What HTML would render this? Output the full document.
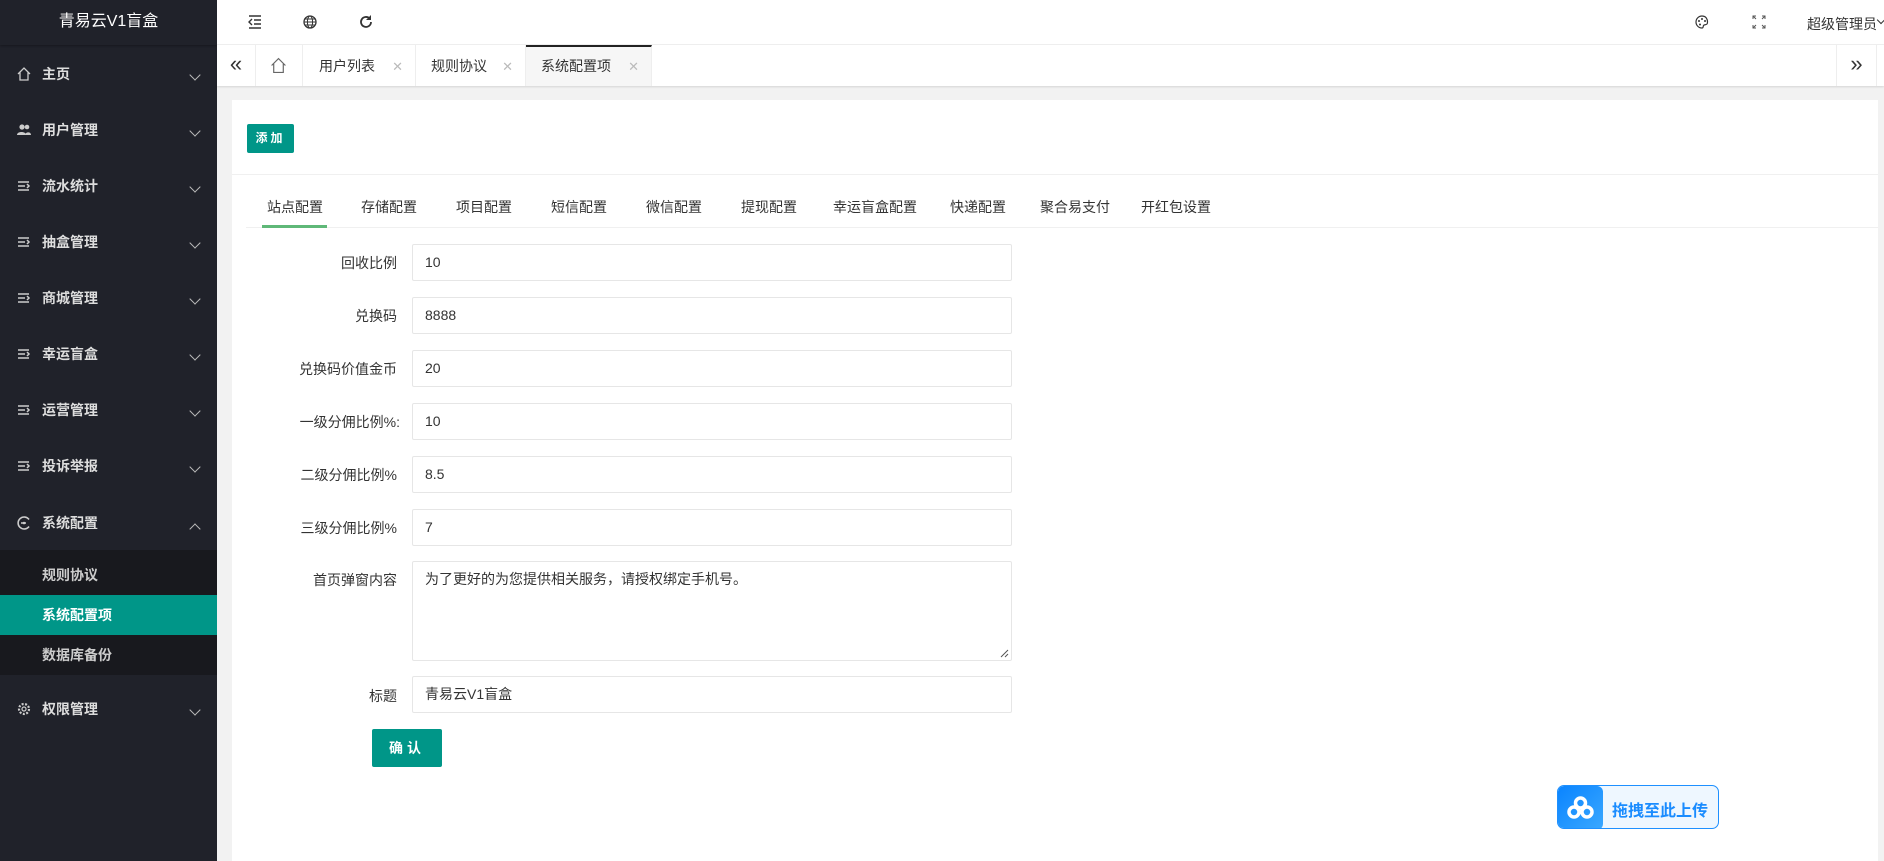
<!DOCTYPE html>
<html><head><meta charset="utf-8"><style>
*{margin:0;padding:0;box-sizing:border-box}
body{width:1884px;height:861px;overflow:hidden;background:#f2f2f2;font-family:"Liberation Sans","Noto Sans CJK SC",sans-serif;font-size:14px;color:#333;position:relative}
.side{position:absolute;left:0;top:0;width:217px;height:861px;background:#20222a}
.logo{height:45px;line-height:44px;text-align:center;color:#fff;font-size:16px;background:#20222a;box-shadow:0 1px 2px rgba(0,0,0,.3)}
.it{position:absolute;left:0;width:217px;height:56px;color:#ddd;font-weight:bold}
.it .t{position:absolute;left:42px;top:19px}
.it .ic{position:absolute;left:16px;top:21px;width:16px;height:16px}
.it .ar{position:absolute;left:191px;top:26px;width:8px;height:8px;border-right:1.5px solid #bbb;border-bottom:1.5px solid #bbb;transform:rotate(45deg)}
.it .ar.up{transform:rotate(-135deg);top:31px}
.sub{position:absolute;left:0;top:550px;width:217px;height:125px;background:#18191e}
.sub div{height:40px;line-height:40px;padding-left:42px;color:#ccc;font-weight:bold}
.sub div:first-child{height:45px;line-height:50px}
.sub .on{background:#009688;color:#fff}
.head{position:absolute;left:217px;top:0;right:0;height:45px;background:#fff;border-bottom:1px solid #f0f0f0}
.tabs{position:absolute;left:217px;top:45px;right:0;height:41px;background:#fff;box-shadow:0 1px 2px rgba(0,0,0,.12)}
.tb{position:absolute;top:0;height:41px;line-height:41px;border-right:1px solid #eee;color:#333}
.tb .x{color:#bbb;position:absolute;right:12px;font-size:13px}
.card{position:absolute;left:232px;top:100px;width:1646px;height:761px;background:#fff}
.btn{position:absolute;background:#009688;color:#fff;font-weight:bold;text-align:center;border-radius:2px}
.ct{position:absolute;top:196px;font-size:14px;color:#333}
.lbl{position:absolute;right:1487px;text-align:right;width:200px;font-size:14px}
.inp{position:absolute;left:412px;width:600px;height:37px;border:1px solid #e6e6e6;padding-left:12px;line-height:35px;font-size:14px;border-radius:2px}
</style></head><body>
<div class="side">
<div class="logo">青易云V1盲盒</div>
<div class="it" style="top:45px"><svg class="ic" viewBox="0 0 16 16"><path d="M2 8L8 2l6 6M4 6.5V14h8V6.5" fill="none" stroke="#ccc" stroke-width="1.3"/></svg><span class="t">主页</span><i class="ar"></i></div>
<div class="it" style="top:101px"><svg class="ic" viewBox="0 0 16 16"><circle cx="6" cy="5" r="2.6" fill="#ccc"/><circle cx="11" cy="5" r="2.3" fill="#ccc"/><path d="M1 13c0-4 9-4 9 0zM9 13c0-3 6-4 6 0z" fill="#ccc"/></svg><span class="t">用户管理</span><i class="ar"></i></div>
<div class="it" style="top:157px"><svg class="ic" viewBox="0 0 16 16"><path d="M2 4h11M2 8h7M2 12h11M11 6l2 2-2 2" fill="none" stroke="#ccc" stroke-width="1.5"/></svg><span class="t">流水统计</span><i class="ar"></i></div>
<div class="it" style="top:213px"><svg class="ic" viewBox="0 0 16 16"><path d="M2 4h11M2 8h7M2 12h11M11 6l2 2-2 2" fill="none" stroke="#ccc" stroke-width="1.5"/></svg><span class="t">抽盒管理</span><i class="ar"></i></div>
<div class="it" style="top:269px"><svg class="ic" viewBox="0 0 16 16"><path d="M2 4h11M2 8h7M2 12h11M11 6l2 2-2 2" fill="none" stroke="#ccc" stroke-width="1.5"/></svg><span class="t">商城管理</span><i class="ar"></i></div>
<div class="it" style="top:325px"><svg class="ic" viewBox="0 0 16 16"><path d="M2 4h11M2 8h7M2 12h11M11 6l2 2-2 2" fill="none" stroke="#ccc" stroke-width="1.5"/></svg><span class="t">幸运盲盒</span><i class="ar"></i></div>
<div class="it" style="top:381px"><svg class="ic" viewBox="0 0 16 16"><path d="M2 4h11M2 8h7M2 12h11M11 6l2 2-2 2" fill="none" stroke="#ccc" stroke-width="1.5"/></svg><span class="t">运营管理</span><i class="ar"></i></div>
<div class="it" style="top:437px"><svg class="ic" viewBox="0 0 16 16"><path d="M2 4h11M2 8h7M2 12h11M11 6l2 2-2 2" fill="none" stroke="#ccc" stroke-width="1.5"/></svg><span class="t">投诉举报</span><i class="ar"></i></div>
<div class="it" style="top:494px"><svg class="ic" viewBox="0 0 16 16"><path d="M13 4.5A6 6 0 1 0 13 11.5M5 8h5" fill="none" stroke="#ccc" stroke-width="1.6"/><circle cx="8" cy="8" r="1.3" fill="#ccc"/></svg><span class="t">系统配置</span><i class="ar up"></i></div>
<div class="sub"><div>规则协议</div><div class="on">系统配置项</div><div>数据库备份</div></div>
<div class="it" style="top:680px"><svg class="ic" viewBox="0 0 16 16"><circle cx="8" cy="8" r="5" fill="none" stroke="#ccc" stroke-width="2.2" stroke-dasharray="2 1.5"/><circle cx="8" cy="8" r="2" fill="none" stroke="#ccc" stroke-width="1.2"/></svg><span class="t">权限管理</span><i class="ar"></i></div>
</div>
<div class="head">
<svg style="position:absolute;left:30px;top:14px" width="16" height="16" viewBox="0 0 16 16"><path d="M2 2h12M7 6h7M7 10h7M2 14h12M5 5L2 8l3 3" fill="none" stroke="#333" stroke-width="1.4"/></svg>
<svg style="position:absolute;left:85px;top:14px" width="16" height="16" viewBox="0 0 16 16"><circle cx="8" cy="8" r="6" fill="none" stroke="#333" stroke-width="1.3"/><ellipse cx="8" cy="8" rx="2.6" ry="6" fill="none" stroke="#333"/><path d="M2 8h12M3 5h10M3 11h10" stroke="#333"/></svg>
<svg style="position:absolute;left:141px;top:14px" width="16" height="16" viewBox="0 0 16 16"><path d="M13 8a5 5 0 1 1-1.5-3.6" fill="none" stroke="#333" stroke-width="1.8"/><path d="M13 1v5H8z" fill="#333"/></svg>
<svg style="position:absolute;left:1477px;top:14px" width="16" height="16" viewBox="0 0 16 16"><path d="M8 2a6 6 0 0 0 0 12c1.5 0 1-1.5 1.5-2.5S12 11 13 10 14 2 8 2z" fill="none" stroke="#333" stroke-width="1.2"/><circle cx="5" cy="7" r="1" fill="#333"/><circle cx="8" cy="5" r="1" fill="#333"/><circle cx="11" cy="7" r="1" fill="#333"/><circle cx="6" cy="10.5" r="1" fill="#333"/></svg>
<svg style="position:absolute;left:1535px;top:15px" width="14" height="14" viewBox="0 0 14 14"><path d="M1 4V1h3M1 1l3 3M13 4V1h-3M13 1l-3 3M1 10v3h3M1 13l3-3M13 10v3h-3M13 13l-3-3" fill="none" stroke="#555" stroke-width="1"/></svg>
<span style="position:absolute;left:1590px;top:14px;font-size:14px;color:#333">超级管理员</span><i style="position:absolute;left:1661px;top:17px;width:6px;height:6px;border-right:1px solid #333;border-bottom:1px solid #333;transform:rotate(45deg)"></i>
</div>
<div class="tabs">
<div class="tb" style="left:0;width:39px;text-align:center;font-size:22px;line-height:38px">«</div>
<div class="tb" style="left:39px;width:47px"><svg style="position:absolute;left:14px;top:12px" width="17" height="17" viewBox="0 0 16 16"><path d="M1.5 8L8 1.5 14.5 8M3.5 6.5V14.5h9V6.5" fill="none" stroke="#666" stroke-width="1.1"/></svg></div>
<div class="tb" style="left:86px;width:113px;padding-left:16px;line-height:43px">用户列表<span class="x">✕</span></div>
<div class="tb" style="left:199px;width:110px;padding-left:15px;line-height:43px">规则协议<span class="x">✕</span></div>
<div class="tb" style="left:309px;width:126px;padding-left:15px;background:#f6f6f6;border-top:2px solid #222;line-height:39px">系统配置项<span class="x">✕</span></div>
<div class="tb" style="left:1619px;width:41px;text-align:center;font-size:22px;line-height:38px;border-left:1px solid #eee">»</div>
</div>
<div class="card">
<div class="btn" style="left:15px;top:24px;width:47px;height:29px;line-height:29px;font-size:12px;letter-spacing:3px">添加</div>
<div style="position:absolute;left:0;top:74px;width:1646px;border-top:1px solid #f0f0f0"></div>
<div style="position:absolute;left:14px;top:127px;width:1632px;border-top:1px solid #f0f0f0"></div>
<div style="position:absolute;left:30px;top:125px;width:65px;height:3px;background:#5fb878"></div>
<span class="ct" style="left:35px;top:97px">站点配置</span>
<span class="ct" style="left:129px;top:97px">存储配置</span>
<span class="ct" style="left:224px;top:97px">项目配置</span>
<span class="ct" style="left:319px;top:97px">短信配置</span>
<span class="ct" style="left:414px;top:97px">微信配置</span>
<span class="ct" style="left:509px;top:97px">提现配置</span>
<span class="ct" style="left:601px;top:97px">幸运盲盒配置</span>
<span class="ct" style="left:718px;top:97px">快递配置</span>
<span class="ct" style="left:808px;top:97px">聚合易支付</span>
<span class="ct" style="left:909px;top:97px">开红包设置</span>
</div>
<div class="lbl" style="top:253px">回收比例</div><div class="inp" style="top:244px">10</div>
<div class="lbl" style="top:306px">兑换码</div><div class="inp" style="top:297px">8888</div>
<div class="lbl" style="top:359px">兑换码价值金币</div><div class="inp" style="top:350px">20</div>
<div class="lbl" style="top:412px;right:1484px">一级分佣比例%:</div><div class="inp" style="top:403px">10</div>
<div class="lbl" style="top:465px">二级分佣比例%</div><div class="inp" style="top:456px">8.5</div>
<div class="lbl" style="top:518px">三级分佣比例%</div><div class="inp" style="top:509px">7</div>
<div class="lbl" style="top:570px">首页弹窗内容</div><div class="inp" style="top:561px;height:100px;line-height:1.4;padding-top:8px">为了更好的为您提供相关服务，请授权绑定手机号。<svg style="position:absolute;right:2px;bottom:2px" width="9" height="9"><path d="M8 1L1 8M8 5L5 8" stroke="#555"/></svg></div>
<div class="lbl" style="top:686px">标题</div><div class="inp" style="top:676px">青易云V1盲盒</div>
<div class="btn" style="left:372px;top:729px;width:70px;height:38px;line-height:38px;font-size:14px;letter-spacing:4px">确认</div>
<div style="position:absolute;left:1557px;top:785px;width:162px;height:44px;border:1px solid #1e90ff;border-radius:7px;background:#eef7ff;overflow:hidden">
<div style="position:absolute;left:0;top:0;width:45px;height:44px;background:linear-gradient(135deg,#0a84ff,#3aa8ff);border-radius:6px"><svg style="position:absolute;left:9px;top:10px" width="27" height="24" viewBox="0 0 27 24"><circle cx="13.5" cy="7" r="5" fill="none" stroke="#fff" stroke-width="3.5"/><circle cx="7" cy="16" r="5" fill="none" stroke="#fff" stroke-width="3.5"/><circle cx="20" cy="16" r="5" fill="none" stroke="#fff" stroke-width="3.5"/></svg></div>
<span style="position:absolute;left:54px;top:11px;color:#1a8cff;font-size:16px;font-weight:bold">拖拽至此上传</span></div>
</body></html>
